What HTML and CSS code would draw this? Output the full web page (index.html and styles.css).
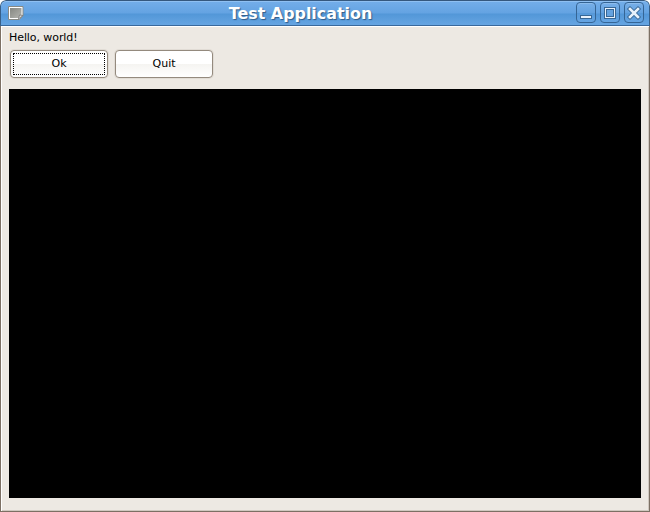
FILE: index.html
```html
<!DOCTYPE html>
<html lang="en">
<head>
<meta charset="utf-8">
<title>Test Application</title>
<link rel="stylesheet" href="styles.css">
</head>
<body>
<div class="window">
  <header class="titlebar">
    <svg class="app-icon" width="16" height="14" viewBox="0 0 16 14">
      <defs><linearGradient id="g" x1="0" y1="0" x2="1" y2="1"><stop offset="0" stop-color="#858782"/><stop offset="1" stop-color="#b4b5b0"/></linearGradient></defs>
      <path d="M.5.5h14.500v9l-3.500 4H.5z" fill="#fff" stroke="#888a85"/>
      <path d="M2 2h11.500v7.500l-2.500 2.500H2z" fill="url(#g)"/>
      <path d="M10.500 13l1-4 3.500.5z" fill="#ddd" stroke="#777" stroke-width=".8"/>
    </svg>
    <h1 class="title">Test Application</h1>
    <div class="controls">
      <button class="control" aria-label="Minimize"><svg width="20" height="21"><rect x="4.500" y="13.500" width="11" height="3" fill="#e8f1fb" stroke="#386795"/></svg></button>
      <button class="control" aria-label="Maximize"><svg width="20" height="21"><rect x="4.500" y="5.500" width="11" height="11" fill="none" stroke="#386795"/><rect x="5.500" y="6.500" width="9" height="9" fill="none" stroke="#e8f1fb"/><rect x="6.500" y="7.500" width="7" height="7" fill="#65a2df" stroke="#386795"/></svg></button>
      <button class="control" aria-label="Close"><svg width="20" height="21"><path d="M6 7l8 8m0-8l-8 8" stroke="#386795" stroke-width="4.400" stroke-linecap="square"/><path d="M6 7l8 8m0-8l-8 8" stroke="#e8f1fb" stroke-width="2.600" stroke-linecap="square"/></svg></button>
    </div>
  </header>
  <main class="content">
    <p class="label">Hello, world!</p>
    <div class="buttons">
      <button class="button focused">Ok</button>
      <button class="button">Quit</button>
    </div>
    <div class="canvas"></div>
  </main>
</div>
</body>
</html>
```

FILE: styles.css
```css
* { box-sizing: border-box; }
body { margin: 0; background: #fff; font-family: "DejaVu Sans", sans-serif; }
.window {
  width: 650px;
  height: 512px;
  display: flex;
  flex-direction: column;
  overflow: hidden;
  border-radius: 6px 6px 0 0;
  background: #ede9e3;
}
.titlebar {
  height: 26px;
  flex: none;
  display: flex;
  align-items: flex-start;
  padding: 0 5px 0 7px;
  border: 1px solid #386089;
  border-top-color: #35587e;
  border-bottom-color: #39699c;
  border-radius: 6px 6px 0 0;
  background: linear-gradient(#74aeea 0, #64a3e2 12px, #5297d8 13px, #66a5e2 100%);
  box-shadow: inset 0 1px #8fc0f2;
}
.app-icon { margin-top: 5px; }
.title {
  flex: 1;
  margin: 0 0 0 -20px;
  padding-left: 21px;
  text-align: center;
  font-size: 15.9px;
  line-height: 25px;
  color: #fff;
  text-shadow: 1px 1px 1px #315c89;
}
.controls { display: flex; gap: 4px; margin-top: 1px; }
.control {
  width: 20px;
  height: 21px;
  padding: 0;
  border: 1px solid #356595;
  border-radius: 4px;
  background: linear-gradient(#77afe9 0, #65a2df 50%, #5598d8 51%, #66a5e3);
  box-shadow: inset 0 1px #8cbcec;
}
.control svg { display: block; margin: -1px; }
.content {
  flex: 1;
  padding: 4px 8px 13px;
  border: 1px solid #7c7064;
  border-top: 0;
  box-shadow: inset 1px 1px #fff, inset -1px -1px #d0c8c0;
}
.label { margin: 0; font-size: 11px; line-height: 15px; letter-spacing: -0.08px; color: #000; }
.buttons { display: flex; gap: 7px; padding: 5px 0 11px 1px; }
.button {
  position: relative;
  width: 98px;
  height: 28px;
  padding: 0 0 2px;
  border: 1px solid #948a7e;
  border-radius: 4px;
  background: linear-gradient(#fff 0, #fff 49%, #f5f4f1 50%, #fff);
  font: 11px "DejaVu Sans", sans-serif;
  color: #000;
  box-shadow: 0 0 0 1px #e1dcd5;
}
.focused::after {
  content: "";
  position: absolute;
  inset: 2px;
  border: 1px dotted #000;
}
.canvas { height: 409px; background: #000; }
```
